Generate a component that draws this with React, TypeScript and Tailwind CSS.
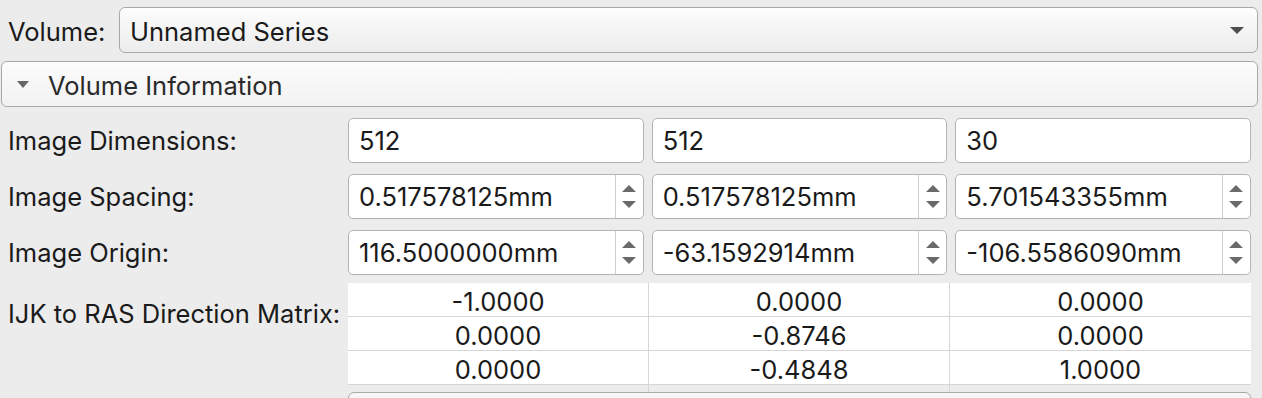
const FONT = { fontFamily: "Inter, 'Liberation Sans', sans-serif" };

function Spin() {
  return (
    <div className="flex flex-col items-center justify-center gap-[9px] w-[28px] h-full border-l border-[#cdcdcd]">
      <svg width="14" height="7" viewBox="0 0 14 7">
        <path d="M7 0 L14 7 L0 7 Z" fill="#6a6a6a" />
      </svg>
      <svg width="14" height="7" viewBox="0 0 14 7">
        <path d="M0 0 L14 0 L7 7 Z" fill="#6a6a6a" />
      </svg>
    </div>
  );
}

function Field({ value, spin }: { value: string; spin?: boolean }) {
  return (
    <div className="flex items-center h-[45px] bg-white border border-[#b3b3b3] rounded-[5px] overflow-hidden">
      <span className="flex-1 pl-[10px] pt-[2px] text-[#1a1a1a]">{value}</span>
      {spin && <Spin />}
    </div>
  );
}

const ROWS = [
  { label: "Image Dimensions:", values: ["512", "512", "30"], spin: false },
  { label: "Image Spacing:", values: ["0.517578125mm", "0.517578125mm", "5.701543355mm"], spin: true },
  { label: "Image Origin:", values: ["116.5000000mm", "-63.1592914mm", "-106.5586090mm"], spin: true },
];

const MATRIX = [
  ["-1.0000", "0.0000", "0.0000"],
  ["0.0000", "-0.8746", "0.0000"],
  ["0.0000", "-0.4848", "1.0000"],
];

export default function App() {
  return (
    <div
      className="w-[1262px] h-[398px] overflow-hidden bg-[#ececec] text-[25.5px] text-[#1a1a1a]"
      style={FONT}
    >
      <div className="flex items-center pl-2 pr-1 pt-[7px]">
        <span className="w-[111px] pt-[4px]">Volume:</span>
        <div className="flex-1 flex items-center h-[46px] pl-[10px] pr-[13px] border border-[#a9a9a9] rounded-[6px] bg-gradient-to-b from-[#fdfdfd] to-[#ececec]">
          <span className="flex-1 pt-[4px]">Unnamed Series</span>
          <svg width="14" height="7" viewBox="0 0 14 7">
            <path d="M0 0 L14 0 L7 7 Z" fill="#4d4d4d" />
          </svg>
        </div>
      </div>

      <div className="pl-[1px] pr-1 pt-2">
        <div className="flex items-center h-[46px] pl-[15px] border border-[#a9a9a9] rounded-[6px] bg-gradient-to-b from-[#fcfcfc] to-[#f2f2f2]">
          <svg width="12" height="7" viewBox="0 0 12 7" className="mr-[19px]">
            <path d="M0 0 L12 0 L6 7 Z" fill="#666" />
          </svg>
          <span className="pt-[4px] text-[#2a2a2a]">Volume Information</span>
        </div>
      </div>

      <div className="grid grid-cols-[340px_1fr] pl-2 pr-[11px] pt-[11px] gap-y-[11px] items-center">
        {ROWS.map((r) => (
          <div key={r.label} className="contents">
            <span className="pt-[2px]">{r.label}</span>
            <div className="grid grid-cols-3 gap-2">
              {r.values.map((v, i) => (
                <Field key={i} value={v} spin={r.spin} />
              ))}
            </div>
          </div>
        ))}
        <span className="self-start pt-[12px] -mt-[3px]">IJK to RAS Direction Matrix:</span>
        <div className="-mt-[3px]">
          <div className="bg-white">
            {MATRIX.map((row, ri) => (
              <div key={ri} className="grid grid-cols-3 h-[34px] border-b border-[#d6d6d6]">
                {row.map((c, ci) => (
                  <div
                    key={ci}
                    className={`flex items-center justify-center pb-[3px] ${ci < 2 ? "border-r border-[#d6d6d6]" : ""}`}
                  >
                    {c}
                  </div>
                ))}
              </div>
            ))}
          </div>
          <div className="mt-[7px] h-[40px] border border-[#a9a9a9] rounded-[6px] bg-[#f6f6f6]" />
        </div>
      </div>
    </div>
  );
}
